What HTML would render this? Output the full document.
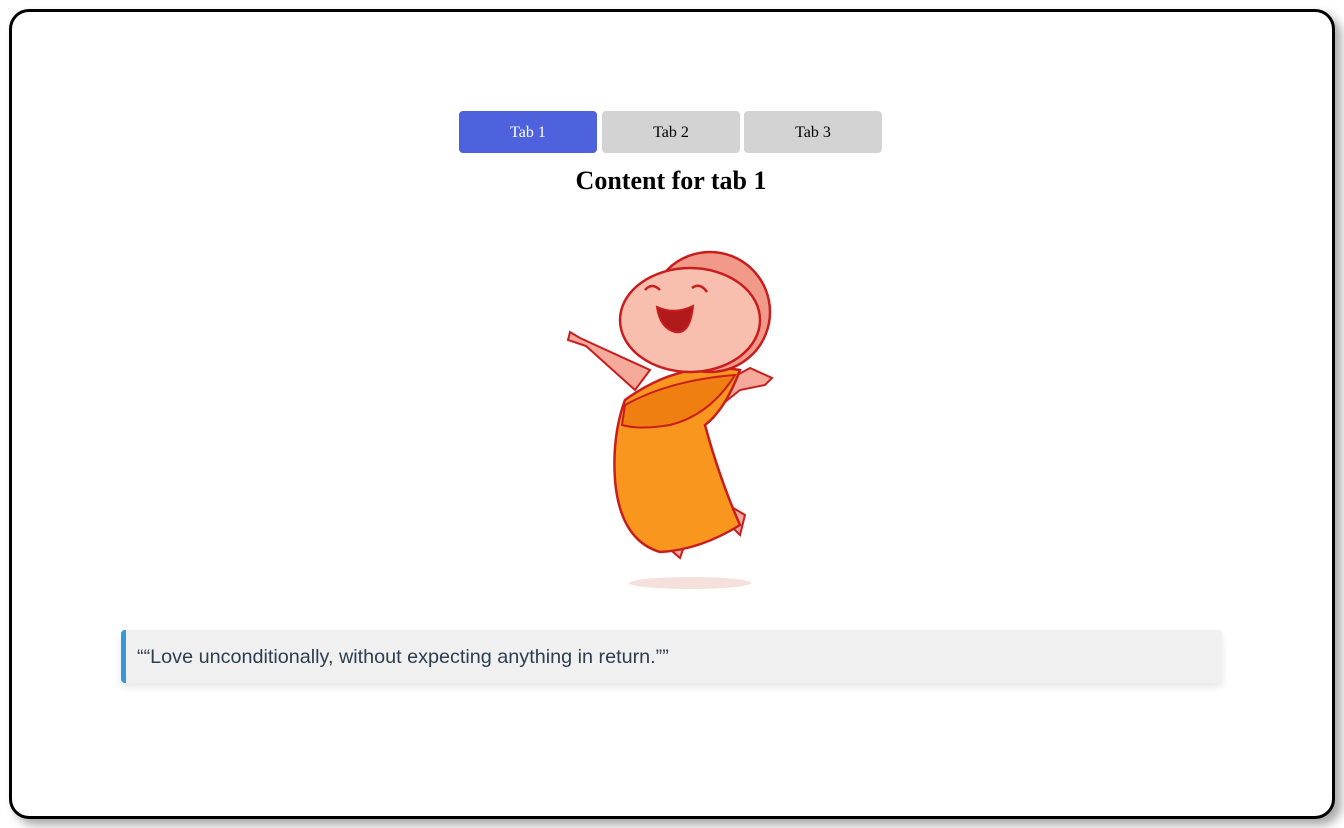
<!DOCTYPE html>
<html><head><meta charset="utf-8"><style>
html,body{margin:0;padding:0;background:#fff;width:1344px;height:828px;overflow:hidden}
.card{position:absolute;left:9px;top:9px;width:1320px;height:804px;border:3px solid #000;border-radius:20px;box-shadow:6px 6px 10px rgba(0,0,0,.35);background:#fff}
.tab{position:absolute;top:111px;height:42px;width:138px;border-radius:4px;font:16px "Liberation Serif",serif;display:flex;align-items:center;justify-content:center;background:#d3d3d3;color:#000;padding-top:2px;box-sizing:border-box}
h2{position:absolute;top:166px;left:0;width:1342px;text-align:center;margin:0;font:bold 26px "Liberation Serif",serif}
.q{position:absolute;left:121px;top:630px;width:1101px;height:53px;background:#f0f0f0;border-left:5px solid #3498db;border-radius:4px;box-shadow:0 4px 8px rgba(0,0,0,.1);box-sizing:border-box;padding-left:11px;font:19.8px "Liberation Sans",sans-serif;color:#2c3e50;line-height:55px}
</style></head><body>
<div class="card"></div>
<div class="tab" style="left:459px;background:#4f62de;color:#fff">Tab 1</div>
<div class="tab" style="left:602px">Tab 2</div>
<div class="tab" style="left:744px">Tab 3</div>
<h2>Content for tab 1</h2>
<svg style="position:absolute;left:540px;top:240px" width="260" height="360" viewBox="0 0 260 360">
<ellipse cx="150" cy="343" rx="61" ry="6" fill="#f6e0dc"/>
<path d="M40 98 L30 92 L28 100 L46 106 L95 150 L110 130 Z" fill="#f4a99a" stroke="#c81e1e" stroke-width="2"/>
<path d="M170 150 L210 128 L232 138 L225 145 L200 150 L175 170 Z" fill="#f4a99a" stroke="#c81e1e" stroke-width="2"/>
<path d="M180 260 L205 275 L200 295 L190 285 L170 285 Z" fill="#f4a99a" stroke="#c81e1e" stroke-width="2"/>
<path d="M120 290 L148 295 L140 318 L125 305 Z" fill="#f4a99a" stroke="#c81e1e" stroke-width="2"/>
<path d="M85 160 Q140 120 200 130 Q185 170 165 185 Q180 240 200 285 Q160 310 120 312 Q80 300 75 240 Q72 195 85 160 Z" fill="#f8961e" stroke="#c81e1e" stroke-width="2.5"/>
<path d="M85 165 Q130 140 195 135 Q170 175 130 185 Q100 190 82 185 Z" fill="#f07f12" stroke="#c81e1e" stroke-width="2"/>
<circle cx="170" cy="72" r="60" fill="#f29a89" stroke="#c81e1e" stroke-width="2.5"/>
<ellipse cx="150" cy="80" rx="70" ry="52" fill="#f9bfae" stroke="#c81e1e" stroke-width="2.5"/>
<path d="M117 67 Q135 75 153 66 Q150 95 135 92 Q120 88 117 67 Z" fill="#b01a1a" stroke="#c81e1e" stroke-width="2"/>
<path d="M105 50 Q112 42 120 50 M152 48 Q160 42 167 52" fill="none" stroke="#c81e1e" stroke-width="2.5"/>
</svg>
<div class="q">““Love unconditionally, without expecting anything in return.””</div>
</body></html>
